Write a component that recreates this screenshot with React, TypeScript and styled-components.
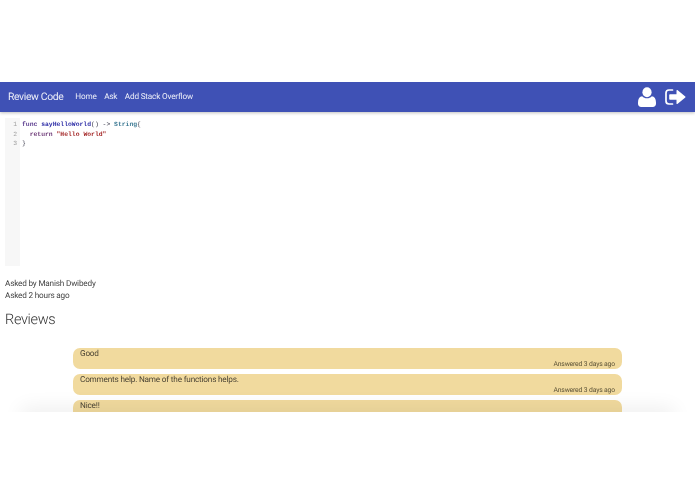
import React from "react";
import styled, { createGlobalStyle } from "styled-components";

const GlobalStyle = createGlobalStyle`
    html, body {
        margin: 0;
        padding: 0;
        background: #ffffff;
        font-family: Roboto, "Liberation Sans", sans-serif;
        text-rendering: geometricPrecision;
    }
`;

const Page = styled.div`
    width: 695px;
    height: 494px;
    padding-top: 82px;
    box-sizing: border-box;
    overflow: hidden;
`;

const Viewport = styled.div`
    position: relative;
    height: 330px;
    overflow: hidden;
    filter: blur(0.3px);
`;

const Navbar = styled.nav`
    height: 30px;
    background: #3f51b5;
    box-shadow: 0 1px 3px rgba(0, 0, 0, 0.25);
    display: flex;
    align-items: center;
    padding: 0 8px;
    color: #ffffff;
`;

const Brand = styled.span`
    font-size: 10.4px;
    font-weight: 400;
    letter-spacing: -0.035em;
    margin-right: 12px;
    margin-top: -2px;
    color: #eceef8;
`;

const NavLink = styled.a`
    font-size: 8.2px;
    letter-spacing: -0.023em;
    margin-right: 7.5px;
    color: #eceef8;
`;

const NavIcons = styled.div`
    margin-left: auto;
    margin-right: 1px;
    display: flex;
    align-items: center;
    gap: 9px;
`;

const CodeBlock = styled.div`
    display: flex;
    height: 148px;
    margin: 6px 0 0 5px;
    font-family: "Liberation Mono", monospace;
    font-size: 6.4px;
    line-height: 9.5px;
`;

const Gutter = styled.div`
    width: 15px;
    background: #f7f7f7;
    color: #a0a0a0;
    text-align: right;
    padding: 2px 3px 0 0;
    box-sizing: border-box;
`;

const CodeLines = styled.pre`
    margin: 0;
    padding: 2px 0 0 2px;
    font: inherit;
    color: #333344;
`;

const Token = styled.span<{ $color: string; $bold?: boolean }>`
    color: ${(props) => props.$color};
    font-weight: ${(props) => (props.$bold ? "bold" : "normal")};
`;

const Meta = styled.div`
    margin: 12px 0 0 5px;
    font-size: 8.2px;
    letter-spacing: -0.023em;
    line-height: 12px;
    color: #444444;
`;

const Heading = styled.h2`
    margin: 9px 0 0 5px;
    font-size: 14.5px;
    letter-spacing: -0.023em;
    line-height: 18px;
    font-weight: 300;
    color: #333333;
`;

const ReviewList = styled.div`
    margin: 19px 73px 0;
    display: flex;
    flex-direction: column;
    gap: 5px;
`;

const ReviewCard = styled.div`
    height: 21px;
    background: #f1da9e;
    border-radius: 7px;
    padding: 1px 7px 0;
    box-sizing: border-box;
    display: flex;
    flex-direction: column;
    font-size: 8.2px;
    letter-spacing: -0.023em;
    line-height: 10px;
    color: #4b4434;
`;

const Answered = styled.div`
    margin-top: auto;
    text-align: right;
    font-size: 6.8px;
    letter-spacing: -0.023em;
    line-height: 9px;
    color: #5a5136;
`;

// soft shadow of the panel that sits just under the visible area
const BottomShadow = styled.div`
    position: absolute;
    left: 25px;
    right: 25px;
    bottom: -12px;
    height: 12px;
    box-shadow: 0 0 20px 4px rgba(0, 0, 0, 0.07);
`;

function UserIcon() {
    return (
        <svg width="18" height="20" viewBox="0 0 18 20" fill="#ffffff">
            <ellipse cx="9" cy="5.2" rx="4.6" ry="5" />
            <path d="M4.2 9.2C5.5 10.6 7.1 11.3 9 11.3s3.500-.7 4.800-2.100c2.600.3 4.200 2.400 4.200 6.300v1.300c0 2-1.300 3.200-3.200 3.200H3.200C1.300 19.900 0 18.700 0 16.800v-1.300c0-3.900 1.600-6 4.200-6.300z" />
        </svg>
    );
}

function SignOutIcon() {
    return (
        <svg width="21" height="16" viewBox="0 0 21 16">
            <path d="M7.500 1H4C2.300 1 1 2.300 1 4v8c0 1.700 1.300 3 3 3h3.500" fill="none" stroke="#ffffff" strokeWidth="1.700" strokeLinecap="round" />
            <path d="M5 5.300h6.500V1.500c0-.5.500-.7.900-.4l7.900 6.400c.3.300.3.700 0 1l-7.900 6.400c-.4.300-.9.100-.9-.4v-3.800H5c-.5 0-.8-.3-.8-.8V6.100c0-.5.300-.8.800-.8z" fill="#ffffff" />
        </svg>
    );
}

const reviews = [
    { text: "Good", when: "Answered 3 days ago" },
    { text: "Comments help. Name of the functions helps.", when: "Answered 3 days ago" },
    { text: "Nice!!" },
];

export default function App() {
    return (
        <Page>
            <GlobalStyle />
            <Viewport>
                <Navbar>
                    <Brand>Review Code</Brand>
                    <NavLink>Home</NavLink>
                    <NavLink>Ask</NavLink>
                    <NavLink>Add Stack Overflow</NavLink>
                    <NavIcons>
                        <UserIcon />
                        <SignOutIcon />
                    </NavIcons>
                </Navbar>
                <CodeBlock>
                    <Gutter>1<br />2<br />3</Gutter>
                    <CodeLines>
                        <Token $color="#5c3d8f" $bold>func</Token> <Token $color="#3030a8" $bold>sayHelloWorld</Token>() -&gt; <Token $color="#3d7a94" $bold>String</Token>{"{\n"}
                        {"  "}<Token $color="#6e3a78" $bold>return</Token> <Token $color="#a52a2a" $bold>"Hello World"</Token>{"\n}"}
                    </CodeLines>
                </CodeBlock>
                <Meta>Asked by Manish Dwibedy<br />Asked 2 hours ago</Meta>
                <Heading>Reviews</Heading>
                <ReviewList>
                    {reviews.map((review, idx) => (
                        <ReviewCard key={idx}>
                            {review.text}
                            {review.when && <Answered>{review.when}</Answered>}
                        </ReviewCard>
                    ))}
                </ReviewList>
                <BottomShadow />
            </Viewport>
        </Page>
    );
}
